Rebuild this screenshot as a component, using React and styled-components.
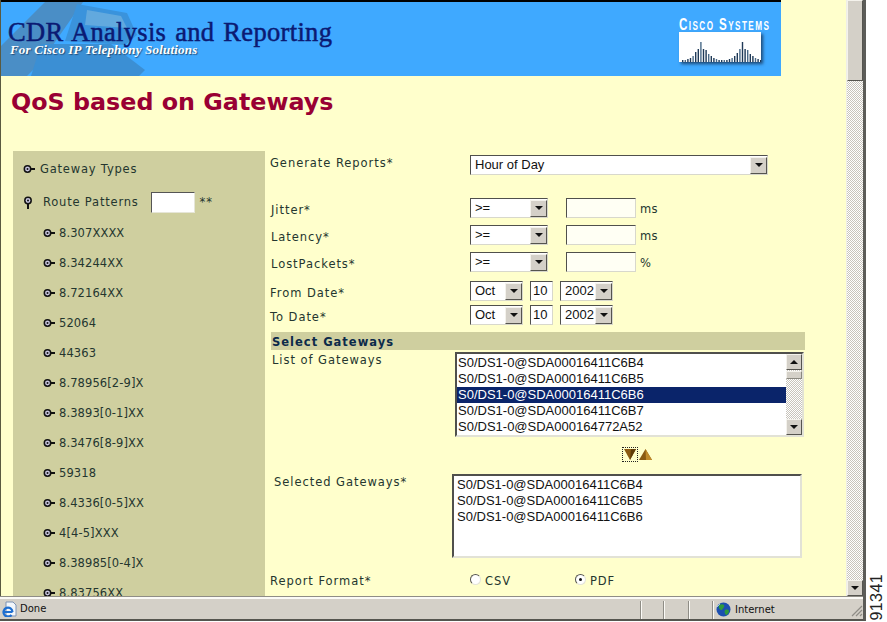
import React from "react";
import styled, { createGlobalStyle } from "styled-components";

const GlobalStyle = createGlobalStyle`
  html, body {
    margin: 0;
    padding: 0;
    background: #fff;
    overflow: hidden;
  }
`;

const Screen = styled.div`
  display: flex;
  width: 887px;
  height: 622px;
  overflow: hidden;
`;

const BrowserWindow = styled.div`
  display: flex;
  flex-direction: column;
  width: 866px;
  height: 621px;
  border-right: 3px solid #5c5c58;
  border-bottom: 2px solid #55554f;
  box-sizing: border-box;
`;

const FigureMargin = styled.div`
  flex: 1;
  display: flex;
  align-items: flex-end;
  justify-content: center;
  padding-bottom: 2px;
`;

const FigureNumber = styled.span`
  writing-mode: vertical-rl;
  transform: rotate(180deg);
  font: 16px/16px "Liberation Sans", Arial, sans-serif;
  letter-spacing: 0.4px;
  color: #222;
`;

const Viewport = styled.div`
  display: flex;
  flex: 1;
  min-height: 0;
`;

const Page = styled.div`
  width: 846px;
  background: #ffffcc;
  border-left: 1px solid #5a5a40;
  box-sizing: border-box;
  overflow: hidden;
`;

const Banner = styled.div`
  position: relative;
  display: flex;
  justify-content: space-between;
  width: 780px;
  height: 76px;
  box-sizing: border-box;
  background: #3fa9ff;
  border-top: 2px solid #000;
  overflow: hidden;
`;

const PhoneArt = styled.svg`
  position: absolute;
  left: 0;
  top: 0;
`;

const BannerText = styled.div`
  position: relative;
  padding: 18px 0 0 7px;
`;

const BannerTitle = styled.div`
  font: 26.5px/25px "Liberation Serif", "Times New Roman", serif;
  letter-spacing: 0.32px;
  word-spacing: 2px;
  color: #0b1a73;
  -webkit-text-stroke: 0.5px #0b1a73;
  white-space: nowrap;
`;

const BannerSub = styled.div`
  margin-left: 2px;
  font: italic bold 13px/10px "Liberation Serif", "Times New Roman", serif;
  letter-spacing: 0.2px;
  color: #fff;
  text-shadow: 1px 1px 1px #25507a;
  white-space: nowrap;
`;

const CiscoLogo = styled.div`
  display: flex;
  flex-direction: column;
  width: 84px;
  margin: 15px 18px 0 0;
`;

const CiscoName = styled.div`
  font: bold 17px/15px "Liberation Sans", Arial, sans-serif;
  font-variant: small-caps;
  letter-spacing: 2.1px;
  color: #fff;
  white-space: nowrap;
  transform: scaleX(0.68);
  transform-origin: left;
`;

const CiscoBars = styled.svg`
  display: block;
  box-shadow: 2px 2px 3px #1d4a78;
`;

const Title = styled.h1`
  margin: 0;
  padding: 11px 0 0 10px;
  height: 75px;
  box-sizing: border-box;
  font: bold 23.8px/30px "DejaVu Sans", Verdana, sans-serif;
  color: #990033;
  white-space: nowrap;
`;

const Main = styled.div`
  display: flex;
  align-items: flex-start;
`;

const Sidebar = styled.div`
  width: 252px;
  height: 445px;
  margin-left: 12px;
  padding: 10px 0 0 10px;
  box-sizing: border-box;
  background: #cfcf9f;
  overflow: hidden;
`;

const TreeRow = styled.div`
  display: flex;
  align-items: center;
  height: 16px;
  margin-top: ${(p) => p.$top || 0}px;
  padding-left: ${(p) => p.$indent || 0}px;
  font: 11.5px/16px "DejaVu Sans", Verdana, sans-serif;
  letter-spacing: ${(p) => p.$spacing}px;
  color: #24362f;
  white-space: nowrap;
`;

const TreeIconBox = styled.svg`
  flex: none;
  margin-right: ${(p) => p.$gap}px;
`;

const TreeLabel = styled.span`
  margin-right: ${(p) => p.$gap || 0}px;
`;

const PatternInput = styled.div`
  width: 44px;
  height: 21px;
  margin-right: 5px;
  box-sizing: border-box;
  background: #fff;
  border: 1px solid;
  border-color: #555 #e6e6d8 #e6e6d8 #555;
`;

const Form = styled.div`
  flex: 1;
  padding-left: 5px;
  min-width: 0;
`;

const FormRow = styled.div`
  display: flex;
  align-items: flex-start;
  height: ${(p) => p.$height || 20}px;
  margin-top: ${(p) => p.$top || 0}px;
`;

const Label = styled.div`
  flex: none;
  width: ${(p) => p.$width || 200}px;
  box-sizing: border-box;
  padding: ${(p) => p.$y || 0}px 0 0 ${(p) => p.$x || 0}px;
  font: 11.5px/16px "DejaVu Sans", Verdana, sans-serif;
  letter-spacing: 0.95px;
  color: #24362f;
  white-space: nowrap;
`;

const SelectBox = styled.div`
  display: flex;
  align-items: center;
  justify-content: space-between;
  width: ${(p) => p.$width}px;
  height: 20px;
  margin-right: ${(p) => p.$gap || 0}px;
  padding-left: 4px;
  box-sizing: border-box;
  background: #fff;
  border: 1px solid;
  border-color: #50504c #d8d8cc #d8d8cc #50504c;
  font: 13px/16px "Liberation Sans", Arial, sans-serif;
  color: #111;
`;

const ScrollButton = styled.div`
  display: flex;
  flex: none;
  align-items: center;
  justify-content: center;
  width: ${(p) => p.$size || 15}px;
  height: ${(p) => p.$size || 15}px;
  box-sizing: border-box;
  background: #d4d0c8;
  border: 1px solid;
  border-color: #f4f2ec #55544f #55544f #f4f2ec;
`;

const Caret = styled.span`
  width: 0;
  height: 0;
  border-left: 4px solid transparent;
  border-right: 4px solid transparent;
  ${(p) => (p.$up ? "border-bottom: 4px solid #111;" : "border-top: 4px solid #111;")}
`;

const TextInput = styled.div`
  width: 70px;
  height: 20px;
  margin: 0 4px 0 18px;
  box-sizing: border-box;
  background: #fffff4;
  border: 1px solid;
  border-color: #50504c #d8d8cc #d8d8cc #50504c;
`;

const DayInput = styled.div`
  width: 23px;
  height: 20px;
  margin-right: 7px;
  padding-left: 2px;
  box-sizing: border-box;
  background: #fff;
  border: 1px solid;
  border-color: #50504c #d8d8cc #d8d8cc #50504c;
  font: 13px/18px "Liberation Sans", Arial, sans-serif;
  color: #111;
`;

const Unit = styled.span`
  font: 11.5px/22px "DejaVu Sans", Verdana, sans-serif;
  letter-spacing: 0.2px;
  color: #24362f;
`;

const SectionBand = styled.div`
  width: 534px;
  height: 18px;
  margin: 7px 0 0 1px;
  padding-left: 1px;
  box-sizing: border-box;
  background: #cfcf9f;
  font: bold 11.5px/20px "DejaVu Sans", Verdana, sans-serif;
  letter-spacing: 1px;
  color: #0b2a4a;
  overflow: hidden;
`;

const ListBox = styled.div`
  display: flex;
  width: ${(p) => p.$width}px;
  height: ${(p) => p.$height}px;
  box-sizing: border-box;
  background: #fff;
  border: 2px solid;
  border-color: #50504c #e2e2d6 #e2e2d6 #50504c;
`;

const ListItems = styled.div`
  flex: 1;
  padding-top: ${(p) => p.$top || 1}px;
  min-width: 0;
`;

const ListItem = styled.div`
  height: 16px;
  padding-left: ${(p) => p.$x || 1}px;
  font: 13px/16px "Liberation Sans", Arial, sans-serif;
  white-space: nowrap;
  background: ${(p) => (p.$selected ? "#0a246a" : "transparent")};
  color: ${(p) => (p.$selected ? "#fff" : "#111")};
`;

const Track = styled.div`
  display: flex;
  flex-direction: column;
  justify-content: space-between;
  width: 16px;
  background-color: #fff;
  background-image: conic-gradient(#c8c4bc 25%, #fff 0 50%, #c8c4bc 0 75%, #fff 0);
  background-size: 2px 2px;
`;

const TrackTop = styled.div`
  display: flex;
  flex-direction: column;
`;

const SmallThumb = styled.div`
  height: 6px;
  margin-top: 1px;
  background: #d4d0c8;
  border: 1px solid;
  border-color: #f4f2ec #8a8880 #8a8880 #f4f2ec;
`;

const ArrowRow = styled.div`
  display: flex;
  align-items: center;
  height: 15px;
  margin: 10px 0 0 352px;
  gap: 1px;
`;

const FocusBox = styled.div`
  display: flex;
  align-items: center;
  justify-content: center;
  width: 16px;
  height: 15px;
  box-sizing: border-box;
  border: 1px dotted #222;
`;

const RadioGroup = styled.div`
  display: flex;
  align-items: center;
  width: ${(p) => p.$width}px;
  font: 11.5px/16px "DejaVu Sans", Verdana, sans-serif;
  letter-spacing: 0.9px;
  color: #24362f;
`;

const RadioDot = styled.span`
  display: flex;
  align-items: center;
  justify-content: center;
  width: 11px;
  height: 11px;
  margin: -4px 4px 0 0;
  box-sizing: border-box;
  border-radius: 50%;
  background: #fff;
  border: 1px solid;
  border-color: #55554f #e4e4d8 #e4e4d8 #55554f;
  &::after {
    content: "";
    width: 3px;
    height: 3px;
    border-radius: 50%;
    background: ${(p) => (p.$checked ? "#111" : "transparent")};
  }
`;

const PageScroll = styled(Track)`
  width: 17px;
  border-left: 1px solid #efeee8;
  box-sizing: border-box;
`;

const PageThumb = styled.div`
  height: 81px;
  box-sizing: border-box;
  background: #d4d0c8;
  border: 1px solid;
  border-color: #f4f2ec #55544f #55544f #f4f2ec;
`;

const StatusBar = styled.div`
  display: flex;
  flex: none;
  align-items: center;
  height: 23px;
  box-sizing: border-box;
  background: #d4d0c8;
  border-top: 1px solid #8f8d86;
  box-shadow: inset 0 2px 0 #fbfaf6;
  font: 11.5px/16px "Liberation Sans", Arial, sans-serif;
  color: #111;
`;

const StatusMain = styled.div`
  display: flex;
  align-items: center;
  gap: 3px;
  width: 640px;
  padding: 2px 0 0 2px;
  box-sizing: border-box;
  font-family: "DejaVu Sans", Verdana, sans-serif;
  font-size: 10px;
`;

const StatusCell = styled.div`
  display: flex;
  align-items: center;
  gap: 4px;
  width: ${(p) => p.$width}px;
  height: 18px;
  margin-top: 3px;
  padding-left: 3px;
  box-sizing: border-box;
  border-left: 1px solid #8f8d86;
  box-shadow: inset 1px 0 0 #fbfaf6;
  font-family: "DejaVu Sans", Verdana, sans-serif;
  font-size: 10px;
`;

const Grip = styled.svg`
  margin-left: auto;
  margin-top: 6px;
`;

const patterns = [
  "8.307XXXX",
  "8.34244XX",
  "8.72164XX",
  "52064",
  "44363",
  "8.78956[2-9]X",
  "8.3893[0-1]XX",
  "8.3476[8-9]XX",
  "59318",
  "8.4336[0-5]XX",
  "4[4-5]XXX",
  "8.38985[0-4]X",
  "8.83756XX",
];

const gateways = [
  "S0/DS1-0@SDA00016411C6B4",
  "S0/DS1-0@SDA00016411C6B5",
  "S0/DS1-0@SDA00016411C6B6",
  "S0/DS1-0@SDA00016411C6B7",
  "S0/DS1-0@SDA000164772A52",
];

const barHeights = [2, 2, 3, 4, 6, 10, 13, 20, 13, 12, 8, 6, 4, 3, 2, 2, 2, 2, 3, 4, 6, 9, 13, 20, 13, 12, 8, 6, 4, 3, 2];

const TreeIcon = ({ open, gap = 4 }) => (
  <TreeIconBox $gap={gap} width={open ? 10 : 12} height={open ? 13 : 10} viewBox={open ? "0 0 10 13" : "0 0 12 10"}>
    {open ? (
      <>
        <circle cx="5" cy="4.5" r="3.2" fill="#c9c6e0" stroke="#111" strokeWidth="1.5" />
        <circle cx="5" cy="4.5" r="1" fill="#111" />
        <path d="M5 8v5" stroke="#111" strokeWidth="2" />
      </>
    ) : (
      <>
        <circle cx="4.5" cy="5" r="3.2" fill="#c9c6e0" stroke="#111" strokeWidth="1.5" />
        <circle cx="4.5" cy="5" r="1" fill="#111" />
        <path d="M8 5h4" stroke="#111" strokeWidth="2" />
      </>
    )}
  </TreeIconBox>
);

const Dropdown = ({ value, width, gap }) => (
  <SelectBox $width={width} $gap={gap}>
    <span>{value}</span>
    <ScrollButton $size={17}>
      <Caret />
    </ScrollButton>
  </SelectBox>
);

const Globe = () => (
  <svg width="15" height="15" viewBox="0 0 15 15">
    <circle cx="7.5" cy="7.5" r="7" fill="#1c4fb0" />
    <path d="M3 3c2-1 4-1 5 0 1 2-1 3-2 5-2 0-4-2-3-5zM9 8c2-1 4 0 4 1 0 2-2 4-3 4-1-1-2-3-1-5z" fill="#2f9a3c" />
    <path d="M1 5l3-3" stroke="#9cc4f0" strokeWidth="1" />
  </svg>
);

const IeIcon = () => (
  <svg width="15" height="16" viewBox="0 0 15 16">
    <path d="M4 1h7l3 3v11H4z" fill="#f2f6fb" stroke="#7c93b5" />
    <path d="M2.5 11h8M10.5 11a4.5 4.5 0 1 0-1 3" stroke="#1f6fd0" strokeWidth="2.2" fill="none" />
  </svg>
);

const App = () => {
  return (
    <Screen>
      <GlobalStyle />
      <BrowserWindow>
        <Viewport>
          <Page>
            <Banner>
              <PhoneArt width="145" height="74" viewBox="0 0 145 74">
                <path d="M0 44L44 0h38L40 60l-14 14H0z" fill="#4a8ec6" />
                <path d="M76 2l50 9 10 22-12 10-60-4z" fill="#3a93dc" />
                <path d="M40 42l70 0 34 26-6 6H30z" fill="#3b8fd4" />
                <path d="M86 8l34 6 6 12-42-3z" fill="#62a9de" />
              </PhoneArt>
              <BannerText>
                <BannerTitle>CDR Analysis and Reporting</BannerTitle>
                <BannerSub>For Cisco IP Telephony Solutions</BannerSub>
              </BannerText>
              <CiscoLogo>
                <CiscoName>Cisco Systems</CiscoName>
                <CiscoBars width="82" height="30" viewBox="0 0 82 30">
                  <rect width="82" height="30" fill="#fff" />
                  {barHeights.map((h, i) => (
                    <rect key={i} x={3 + i * 2.6} y={30 - h} width="1.4" height={h} fill={i % 3 === 1 ? "#4a6a88" : "#1f3a58"} />
                  ))}
                </CiscoBars>
              </CiscoLogo>
            </Banner>
            <Title>QoS based on Gateways</Title>
            <Main>
              <Sidebar>
                <TreeRow $spacing={0.8}>
                  <TreeIcon gap={5} />
                  Gateway Types
                </TreeRow>
                <TreeRow $top={17} $spacing={0.8}>
                  <TreeIcon open gap={10} />
                  <TreeLabel $gap={12}>Route Patterns</TreeLabel>
                  <PatternInput />
                  **
                </TreeRow>
                {patterns.map((p, i) => (
                  <TreeRow key={p} $indent={20} $top={i === 0 ? 15 : 14} $spacing={0.1}>
                    <TreeIcon />
                    {p}
                  </TreeRow>
                ))}
              </Sidebar>
              <Form>
                <FormRow $top={4}>
                  <Label $y={0}>Generate Reports*</Label>
                  <Dropdown value="Hour of Day" width={298} />
                </FormRow>
                <FormRow $top={23}>
                  <Label $y={4} $x={1}>Jitter*</Label>
                  <Dropdown value=">=" width={78} />
                  <TextInput />
                  <Unit>ms</Unit>
                </FormRow>
                <FormRow $top={7}>
                  <Label $y={4} $x={1}>Latency*</Label>
                  <Dropdown value=">=" width={78} />
                  <TextInput />
                  <Unit>ms</Unit>
                </FormRow>
                <FormRow $top={7}>
                  <Label $y={4} $x={1}>LostPackets*</Label>
                  <Dropdown value=">=" width={78} />
                  <TextInput />
                  <Unit>%</Unit>
                </FormRow>
                <FormRow $top={9}>
                  <Label $y={4}>From Date*</Label>
                  <Dropdown value="Oct" width={53} gap={7} />
                  <DayInput>10</DayInput>
                  <Dropdown value="2002" width={53} />
                </FormRow>
                <FormRow $top={4}>
                  <Label $y={4}>To Date*</Label>
                  <Dropdown value="Oct" width={53} gap={7} />
                  <DayInput>10</DayInput>
                  <Dropdown value="2002" width={53} />
                </FormRow>
                <SectionBand>Select Gateways</SectionBand>
                <FormRow $top={2} $height={85}>
                  <Label $width={185} $x={2} $y={0}>List of Gateways</Label>
                  <ListBox $width={349} $height={85}>
                    <ListItems>
                      {gateways.map((g, i) => (
                        <ListItem key={g} $selected={i === 2}>{g}</ListItem>
                      ))}
                    </ListItems>
                    <Track>
                      <TrackTop>
                        <ScrollButton $size={16}>
                          <Caret $up />
                        </ScrollButton>
                        <SmallThumb />
                      </TrackTop>
                      <ScrollButton $size={16}>
                        <Caret />
                      </ScrollButton>
                    </Track>
                  </ListBox>
                </FormRow>
                <ArrowRow>
                  <FocusBox>
                    <svg width="12" height="11" viewBox="0 0 12 11">
                      <path d="M0 0h12L6 11z" fill="#8a5a12" />
                      <path d="M6 11L12 0H7z" fill="#5f3c08" />
                    </svg>
                  </FocusBox>
                  <svg width="13" height="11" viewBox="0 0 13 11">
                    <path d="M6.5 0L13 11H0z" fill="#8a5a12" />
                    <path d="M6.5 0L13 11H7z" fill="#c08a2a" />
                  </svg>
                </ArrowRow>
                <FormRow $top={12} $height={84}>
                  <Label $width={182} $x={4} $y={0}>Selected Gateways*</Label>
                  <ListBox $width={350} $height={84}>
                    <ListItems $top={1}>
                      {gateways.slice(0, 3).map((g) => (
                        <ListItem key={g} $x={3}>{g}</ListItem>
                      ))}
                    </ListItems>
                  </ListBox>
                </FormRow>
                <FormRow $top={15}>
                  <Label $y={0}>Report Format*</Label>
                  <RadioGroup $width={105}>
                    <RadioDot />
                    CSV
                  </RadioGroup>
                  <RadioGroup $width={60}>
                    <RadioDot $checked />
                    PDF
                  </RadioGroup>
                </FormRow>
              </Form>
            </Main>
          </Page>
          <PageScroll>
            <PageThumb />
            <ScrollButton $size={16}>
              <Caret />
            </ScrollButton>
          </PageScroll>
        </Viewport>
        <StatusBar>
          <StatusMain>
            <IeIcon />
            Done
          </StatusMain>
          <StatusCell $width={23} />
          <StatusCell $width={25} />
          <StatusCell $width={24} />
          <StatusCell $width={90}>
            <Globe />
            Internet
          </StatusCell>
          <Grip width="12" height="12" viewBox="0 0 12 12">
            <path d="M11 1L1 11M11 5l-6 6M11 9l-2 2" stroke="#8f8d86" strokeWidth="1.2" />
          </Grip>
        </StatusBar>
      </BrowserWindow>
      <FigureMargin>
        <FigureNumber>91341</FigureNumber>
      </FigureMargin>
    </Screen>
  );
};

export default App;
